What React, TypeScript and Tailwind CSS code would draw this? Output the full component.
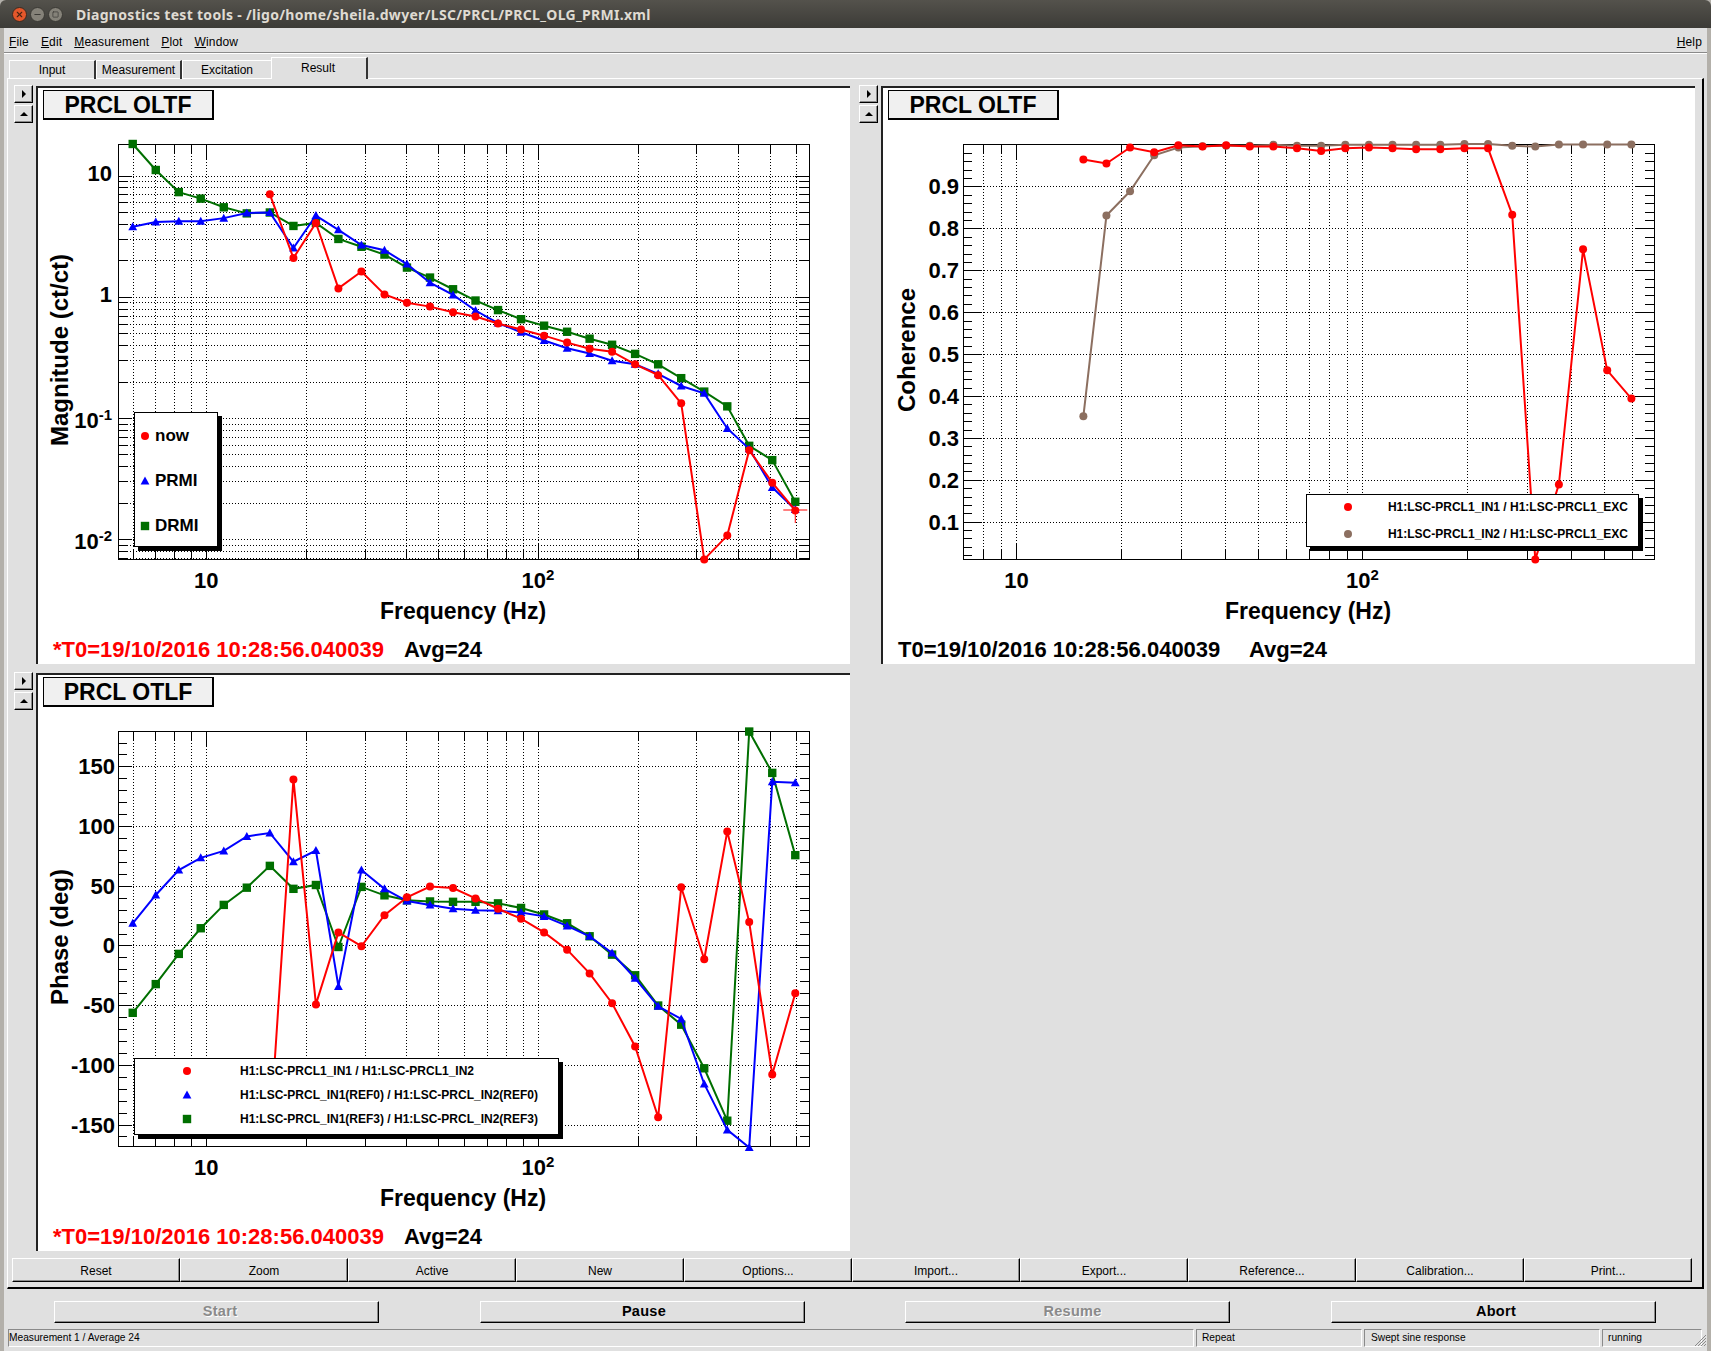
import { Minus, Square, X } from 'lucide-react'

type Marker = 'circle' | 'triangle' | 'square'
type Series = { color: string; marker: Marker; points: [number, number][] }
type Tick = { y: number; major: boolean; grid: boolean; label?: string; sup?: string; dy?: number }

const RED = '#ff0000'
const BLUE = '#0000ff'
const GREEN = '#006f00'
const BROWN = '#8c6f60'

const FRAME = { left: 80, right: 771, top: 24, bottom: 439 }

// x values read off the sweep, same 30 points for the two left plots
const sweepX = [242, 284, 326, 366, 408, 450, 492, 535, 576, 617, 659, 701, 742, 784, 826, 867, 908, 950, 992, 1034, 1075, 1116, 1158, 1200, 1242, 1284, 1326, 1366, 1408, 1450]
const cohX = [425, 467, 510, 554, 598, 642, 685, 728, 771, 814, 858, 902, 945, 988, 1031, 1075, 1119, 1162, 1206, 1248, 1291, 1335, 1379, 1423]

const leftX = (z: number) => (z * 860) / 1568 - 38
const rightX = (z: number) => (z * 861) / 1568 - 33
const topY = (z: number) => (z * 680) / 1568 - 120
const phaseY = (z: number) => (z * 600) / 1568 - 47

const mag = (xs: number[], ys: number[]): [number, number][] => {
  const off = xs.length - ys.length
  return ys.map((y, i) => [leftX(xs[i + off]), topY(y)])
}

const magSeries: Series[] = [
  {
    color: GREEN,
    marker: 'square',
    points: mag(sweepX, [332, 392, 443, 458, 478, 492, 490, 521, 514, 551, 569, 587, 617, 640, 667, 693, 715, 736, 751, 765, 781, 795, 816, 840, 872, 903, 937, 1028, 1061, 1157]),
  },
  {
    color: BLUE,
    marker: 'triangle',
    points: mag(sweepX, [523, 512, 510, 510, 503, 491, 490, 572, 497, 530, 565, 577, 609, 652, 680, 716, 745, 766, 785, 803, 815, 832, 840, 862, 890, 907, 988, 1035, 1124, 1175]),
  },
  {
    color: RED,
    marker: 'circle',
    points: mag(sweepX, [448, 595, 514, 665, 626, 679, 698, 707, 720, 730, 746, 760, 774, 790, 804, 811, 840, 865, 930, 1290, 1235, 1038, 1113, 1177]),
  },
]

const phase = (ys: number[]): [number, number][] => {
  const off = sweepX.length - ys.length
  return ys.map((y, i) => [leftX(sweepX[i + off]), phaseY(y)])
}

const phaseSeries: Series[] = [
  {
    color: GREEN,
    marker: 'square',
    points: phase([922, 847, 768, 701, 640, 595, 538, 598, 588, 750, 593, 615, 628, 631, 632, 632, 636, 648, 665, 688, 722, 770, 824, 903, 953, 1067, 1204, 187, 295, 510]),
  },
  {
    color: BLUE,
    marker: 'triangle',
    points: phase([688, 614, 549, 517, 499, 461, 452, 527, 498, 853, 549, 598, 630, 640, 650, 654, 655, 660, 670, 695, 722, 766, 832, 905, 938, 1108, 1228, 1274, 318, 321]),
  },
  {
    color: RED,
    marker: 'circle',
    points: phase([1240, 312, 900, 712, 748, 667, 620, 592, 596, 623, 650, 676, 712, 757, 819, 897, 1010, 1195, 594, 782, 448, 685, 1083, 871]),
  },
]

const coh = (ys: number[]): [number, number][] => ys.map((y, i) => [rightX(cohX[i]), topY(y)])

const cohSeries: Series[] = [
  {
    color: BROWN,
    marker: 'circle',
    points: coh([960, 497, 441, 358, 340, 337, 336, 336, 334, 336, 336, 334, 334, 334, 334, 334, 332, 332, 336, 338, 333, 333, 333, 333]),
  },
  {
    color: RED,
    marker: 'circle',
    points: coh([368, 377, 340, 351, 335, 338, 335, 338, 338, 342, 348, 342, 340, 342, 344, 344, 342, 342, 495, 1290, 1117, 575, 854, 919]),
  },
]

const freqTicks = [6, 7, 8, 9, 10, 20, 30, 40, 50, 60, 70, 80, 90, 100, 200, 300, 400, 500, 600]

const magTicks: Tick[] = [10, 1, 0.1, 0.01, 0.001].flatMap((d) =>
  [1, 2, 3, 4, 5, 6, 7, 8, 9].map((m) => {
    const e = Math.log10(d)
    const labels: Record<string, [string, string?]> = {
      '1': ['10'],
      '0': ['1'],
      '-1': ['10', '-1'],
      '-2': ['10', '-2'],
    }
    const l = m === 1 ? labels[String(Math.round(e))] : undefined
    return {
      y: 55.6 + 121.2 * (1 - Math.log10(m * d)),
      major: m === 1,
      grid: true,
      label: l?.[0],
      sup: l?.[1],
      dy: l?.[1] ? 9.5 : 5.5,
    }
  }),
)

const cohTicks: Tick[] = Array.from({ length: 50 }, (_, i) => i + 1).map((i) => ({
  y: topY(333.4) + (i * 41.9) / 5 - 41.9 / 5,
  major: (i - 1) % 5 === 0,
  grid: (i - 1) % 5 === 0,
  label: (i - 1) % 5 === 0 && i > 1 ? (1 - (i - 1) / 50).toFixed(1) : undefined,
}))

const phaseTicks: Tick[] = Array.from({ length: 35 }, (_, i) => 170 - i * 10).map((v) => ({
  y: phaseY(746 - v * 3.12),
  major: v % 50 === 0,
  grid: v % 50 === 0,
  label: v % 50 === 0 ? String(v) : undefined,
}))

function Dot({ marker, color, x, y }: { marker: Marker; color: string; x: number; y: number }) {
  if (marker === 'circle') return <circle cx={x} cy={y} r={4} fill={color} />
  if (marker === 'square') return <rect x={x - 4.2} y={y - 4.2} width={8.4} height={8.4} fill={color} />
  return <polygon points={`${x},${y - 4.5} ${x + 4.4},${y + 3.5} ${x - 4.4},${y + 3.5}`} fill={color} />
}

function MarkerIcon({ marker, color }: { marker: Marker; color: string }) {
  return (
    <svg width="10" height="10" className="shrink-0">
      <Dot marker={marker} color={color} x={5} y={5} />
    </svg>
  )
}

function Chart({
  series,
  ticks,
  x10,
  decade,
  yTitle,
  titleX,
  labelX,
  minFreq = 6,
  majorLen = 14,
  minorLen = 9,
  cross,
}: {
  series: Series[]
  ticks: Tick[]
  x10: number
  decade: number
  yTitle: string
  titleX: number
  labelX: number
  minFreq?: number
  majorLen?: number
  minorLen?: number
  cross?: [number, number]
}) {
  const xOf = (f: number) => x10 + decade * (Math.log10(f) - 1)
  const { left, right, top, bottom } = FRAME
  const yTicks = ticks.filter((t) => t.y > top + 1 && t.y < bottom - 1)

  return (
    <svg width="812" height="512" className="block shrink-0 font-bold">
      <g shapeRendering="crispEdges" stroke="#000" fill="none">
        {freqTicks
          .filter((f) => f >= minFreq)
          .map((f) => {
            const x = Math.round(xOf(f)) + 0.5
            const len = f === 10 || f === 100 ? 15 : 10
            return (
              <g key={f}>
                <line x1={x} x2={x} y1={top} y2={bottom} strokeDasharray="1 2" />
                <line x1={x} x2={x} y1={top} y2={top + len} />
                <line x1={x} x2={x} y1={bottom} y2={bottom - len} />
              </g>
            )
          })}
        {yTicks.map((t, i) => {
          const y = Math.round(t.y) + 0.5
          const len = t.major ? majorLen : minorLen
          return (
            <g key={i}>
              {t.grid && <line x1={left} x2={right} y1={y} y2={y} strokeDasharray="1 2" />}
              <line x1={left} x2={left + len} y1={y} y2={y} />
              <line x1={right} x2={right - len} y1={y} y2={y} />
            </g>
          )
        })}
        <rect x={left + 0.5} y={top + 0.5} width={right - left} height={bottom - top} />
      </g>

      {series.map((s) => (
        <g key={s.color}>
          <polyline
            points={s.points.map((p) => p.join(',')).join(' ')}
            fill="none"
            stroke={s.color}
            strokeWidth={2}
          />
          {s.points.map((p, i) => (
            <Dot key={i} marker={s.marker} color={s.color} x={p[0]} y={p[1]} />
          ))}
        </g>
      ))}
      {cross && (
        <g stroke={RED} strokeWidth={1}>
          <line x1={cross[0] - 12} x2={cross[0] + 12} y1={cross[1]} y2={cross[1]} />
          <line x1={cross[0]} x2={cross[0]} y1={cross[1] - 3} y2={cross[1] + 13} />
        </g>
      )}

      <g fontSize="22" fill="#000">
        {yTicks
          .filter((t) => t.label)
          .map((t, i) => (
            <text key={i} x={labelX} y={t.y + (t.dy ?? 8)} textAnchor="end">
              {t.label}
              {t.sup && (
                <tspan fontSize="15" dy="-8">
                  {t.sup}
                </tspan>
              )}
            </text>
          ))}
        <text x={xOf(10)} y={468} textAnchor="middle">
          10
        </text>
        <text x={xOf(100)} y={468} textAnchor="middle">
          10
          <tspan fontSize="15" dy="-8">
            2
          </tspan>
        </text>
      </g>
      <text x={425} y={499} textAnchor="middle" fontSize="23" fill="#000">
        Frequency (Hz)
      </text>
      <text transform={`translate(${titleX} 230) rotate(-90)`} textAnchor="middle" fontSize="24" fill="#000">
        {yTitle}
      </text>
    </svg>
  )
}

function Raised({ className, children }: { className: string; children?: React.ReactNode }) {
  return (
    <div
      className={`flex items-center justify-center bg-[#e0e0e0] border-t border-l border-t-white border-l-white border-b border-r border-b-black border-r-black shadow-[inset_-1px_-1px_0_#8a8a8a] ${className}`}
    >
      {children}
    </div>
  )
}

function Panel({
  title,
  star,
  children,
  legend,
}: {
  title: string
  star?: boolean
  children: React.ReactNode
  legend: React.ReactNode
}) {
  return (
    <div className="flex gap-[3px]">
      <div className="flex w-[19px] flex-col gap-[2px]">
        <Raised className="h-[18px]">
          <svg width="6" height="8">
            <polygon points="1,0 5,4 1,8" fill="#000" />
          </svg>
        </Raised>
        <Raised className="h-[18px]">
          <svg width="8" height="6">
            <polygon points="0,5 4,1 8,5" fill="#000" />
          </svg>
        </Raised>
      </div>
      <div className="relative mt-[1px] flex h-[578px] w-[814px] flex-col overflow-hidden border-t-2 border-l-2 border-t-[#222] border-l-[#222] bg-white">
        <div className="mt-[2px] ml-[5px] flex h-[30px] w-[171px] shrink-0 items-center justify-center border-t border-l border-b-2 border-r-2 border-black bg-[#f0f0f0] pt-[2px] text-[23px] leading-none font-bold text-black">
          {title}
        </div>
        {children}
        <div className="flex h-[32px] pt-[2px] pl-[15px] text-[22px] leading-[32px] font-bold whitespace-nowrap">
          <span className={`w-[351px] ${star ? 'text-[#ff0000]' : 'text-black'}`}>
            {star ? '*' : ''}T0=19/10/2016 10:28:56.040039
          </span>
          <span className="text-black">Avg=24</span>
        </div>
        {legend}
      </div>
    </div>
  )
}

const legendBox = 'absolute grid border border-black bg-white font-bold text-black shadow-[4px_4px_0_#000]'

export default function App() {
  const actions = ['Reset', 'Zoom', 'Active', 'New', 'Options...', 'Import...', 'Export...', 'Reference...', 'Calibration...', 'Print...']

  return (
    <div className="flex h-[1351px] w-[1711px] flex-col overflow-hidden bg-[#b3b0aa] text-[12px] text-black [font-family:'Liberation_Sans',sans-serif]">
      {/* title bar */}
      <div className="flex h-[28px] shrink-0 items-center rounded-t-[6px] bg-gradient-to-b from-[#54524c] to-[#3c3b37] pl-[12px]">
        <div className="flex h-[15px] w-[15px] items-center justify-center rounded-full border border-[#3a2a20] bg-[#e4572b] text-[#4a2413]">
          <X size={9} strokeWidth={3} />
        </div>
        <div className="ml-[3px] flex h-[15px] w-[15px] items-center justify-center rounded-full border border-[#3a3934] bg-[#858279] text-[#3c3b37]">
          <Minus size={9} strokeWidth={3} />
        </div>
        <div className="ml-[3px] flex h-[15px] w-[15px] items-center justify-center rounded-full border border-[#3a3934] bg-[#858279] text-[#3c3b37]">
          <Square size={7} strokeWidth={2.5} />
        </div>
        <div className="ml-[13px] text-[14px] font-bold tracking-[0.3px] text-[#dfdbd2] [font-family:'Noto_Sans',sans-serif]">
          Diagnostics test tools - /ligo/home/sheila.dwyer/LSC/PRCL/PRCL_OLG_PRMI.xml
        </div>
      </div>

      <div className="mx-[4px] flex min-h-0 flex-1 flex-col bg-[#e0e0e0]">
        {/* menu */}
        <div className="flex h-[24px] shrink-0 items-center justify-between px-[5px] pt-[3px] tracking-[0.15px]">
          <div className="flex gap-[12px]">
            <span><span className="underline">F</span>ile</span>
            <span><span className="underline">E</span>dit</span>
            <span><span className="underline">M</span>easurement</span>
            <span><span className="underline">P</span>lot</span>
            <span><span className="underline">W</span>indow</span>
          </div>
          <span><span className="underline">H</span>elp</span>
        </div>
        <div className="h-[2px] shrink-0 border-t border-b border-t-[#8a8a8a] border-b-white" />

        {/* tabs */}
        <div className="relative z-10 -mb-px flex h-[25px] shrink-0 items-end pl-[5px]">
          <div className="flex h-[19px] w-[87px] items-end justify-center border-t border-l border-t-white border-l-white border-r-2 border-r-[#333]">Input</div>
          <div className="flex h-[19px] w-[86px] items-end justify-center border-t border-l border-t-white border-l-white border-r-2 border-r-[#333]">Measurement</div>
          <div className="flex h-[19px] w-[89px] items-end justify-center border-t border-l border-t-white border-l-white">Excitation</div>
          <div className="flex h-[22px] w-[97px] items-start justify-center border-t border-l border-t-white border-l-white border-r-2 border-r-[#333] bg-[#e0e0e0] pt-[1px] pr-[2px]">Result</div>
        </div>

        {/* tab frame */}
        <div className="mx-[3px] flex shrink-0 flex-col border-t border-l border-t-white border-l-white border-r-2 border-b-2 border-r-black border-b-black pt-[6px] pb-[5px] pl-[6px]">
          <div className="grid grid-cols-[836px_836px] gap-x-[9px] gap-y-[8px]">
            <Panel
              title="PRCL OLTF"
              star
              legend={
                <div className={`${legendBox} top-[324px] left-[96px] h-[135px] w-[84px] grid-rows-[45px_46px_44px] text-[17px]`}>
                  {[
                    ['now', 'circle', RED],
                    ['PRMI', 'triangle', BLUE],
                    ['DRMI', 'square', GREEN],
                  ].map(([label, marker, color]) => (
                    <div key={label} className="flex items-center gap-[5px] pl-[5px]">
                      <MarkerIcon marker={marker as Marker} color={color} />
                      {label}
                    </div>
                  ))}
                </div>
              }
            >
              <Chart series={magSeries} ticks={magTicks} x10={168.2} decade={331.8} yTitle="Magnitude (ct/ct)" titleX={30} labelX={74} cross={[leftX(1450), topY(1176)]} />
            </Panel>
            <Panel
              title="PRCL OLTF"
              legend={
                <div className={`${legendBox} top-[406px] left-[423px] h-[53px] w-[333px] grid-rows-2 gap-[4px] text-[12px]`}>
                  {[
                    ['H1:LSC-PRCL1_IN1 / H1:LSC-PRCL1_EXC', RED],
                    ['H1:LSC-PRCL1_IN2 / H1:LSC-PRCL1_EXC', BROWN],
                  ].map(([label, color]) => (
                    <div key={label} className="flex items-center justify-between pr-[10px] pl-[36px]">
                      <MarkerIcon marker="circle" color={color} />
                      {label}
                    </div>
                  ))}
                </div>
              }
            >
              <Chart series={cohSeries} ticks={cohTicks} x10={133.4} decade={346} yTitle="Coherence" titleX={32} labelX={76} minFreq={8} majorLen={18} />
            </Panel>
            <Panel
              title="PRCL OTLF"
              star
              legend={
                <div className={`${legendBox} top-[383px] left-[96px] h-[77px] w-[425px] grid-rows-3 pb-[3px] text-[12px]`}>
                  {[
                    ['H1:LSC-PRCL1_IN1 / H1:LSC-PRCL1_IN2', 'circle', RED],
                    ['H1:LSC-PRCL_IN1(REF0) / H1:LSC-PRCL_IN2(REF0)', 'triangle', BLUE],
                    ['H1:LSC-PRCL_IN1(REF3) / H1:LSC-PRCL_IN2(REF3)', 'square', GREEN],
                  ].map(([label, marker, color]) => (
                    <div key={label} className="flex items-center gap-[48px] pl-[47px]">
                      <MarkerIcon marker={marker as Marker} color={color} />
                      {label}
                    </div>
                  ))}
                </div>
              }
            >
              <Chart series={phaseSeries} ticks={phaseTicks} x10={168.2} decade={331.8} yTitle="Phase (deg)" titleX={30} labelX={77} />
            </Panel>
          </div>

          <div className="mt-[7px] -ml-[2px] flex">
            {actions.map((a) => (
              <Raised key={a} className="h-[24px] w-[168px] pt-[1px]">
                {a}
              </Raised>
            ))}
          </div>
        </div>

        {/* run controls */}
        <div className="mt-[12px] flex h-[22px] shrink-0 gap-[100.5px] pl-[50px] text-[14.5px] leading-none font-bold tracking-[0.3px]">
          <Raised className="w-[325px] pb-[1px] pl-[7px] text-[#8a8a8a] [text-shadow:1px_1px_0_#fff]">Start</Raised>
          <Raised className="w-[325px] pb-[1px] pl-[4px]">Pause</Raised>
          <Raised className="w-[325px] pb-[1px] pl-[10px] text-[#8a8a8a] [text-shadow:1px_1px_0_#fff]">Resume</Raised>
          <Raised className="w-[325px] pb-[1px] pl-[6px]">Abort</Raised>
        </div>

        {/* status bar */}
        <div className="relative mt-[6px] flex h-[18px] shrink-0 gap-[2px] pl-[4px] text-[10.2px] leading-none">
          <div className="flex w-[1186px] items-center border-t border-l border-t-[#8a8a8a] border-l-[#8a8a8a] border-b border-r border-b-white border-r-white pt-[1px]">Measurement 1 / Average 24</div>
          <div className="flex w-[166px] items-center border-t border-l border-t-[#8a8a8a] border-l-[#8a8a8a] border-b border-r border-b-white border-r-white pt-[1px] pl-[5px]">Repeat</div>
          <div className="flex w-[236px] items-center border-t border-l border-t-[#8a8a8a] border-l-[#8a8a8a] border-b border-r border-b-white border-r-white pt-[1px] pl-[6px]">Swept sine response</div>
          <div className="flex w-[100px] items-center border-t border-l border-t-[#8a8a8a] border-l-[#8a8a8a] border-b border-r border-b-white border-r-white pt-[1px] pl-[5px]">running</div>
          <svg width="12" height="12" className="absolute right-[1px] bottom-[1px]" stroke="#8a8a8a">
            <path d="M12 1 L1 12 M12 4 L4 12 M12 7 L7 12 M12 10 L10 12" />
          </svg>
        </div>
      </div>
    </div>
  )
}
